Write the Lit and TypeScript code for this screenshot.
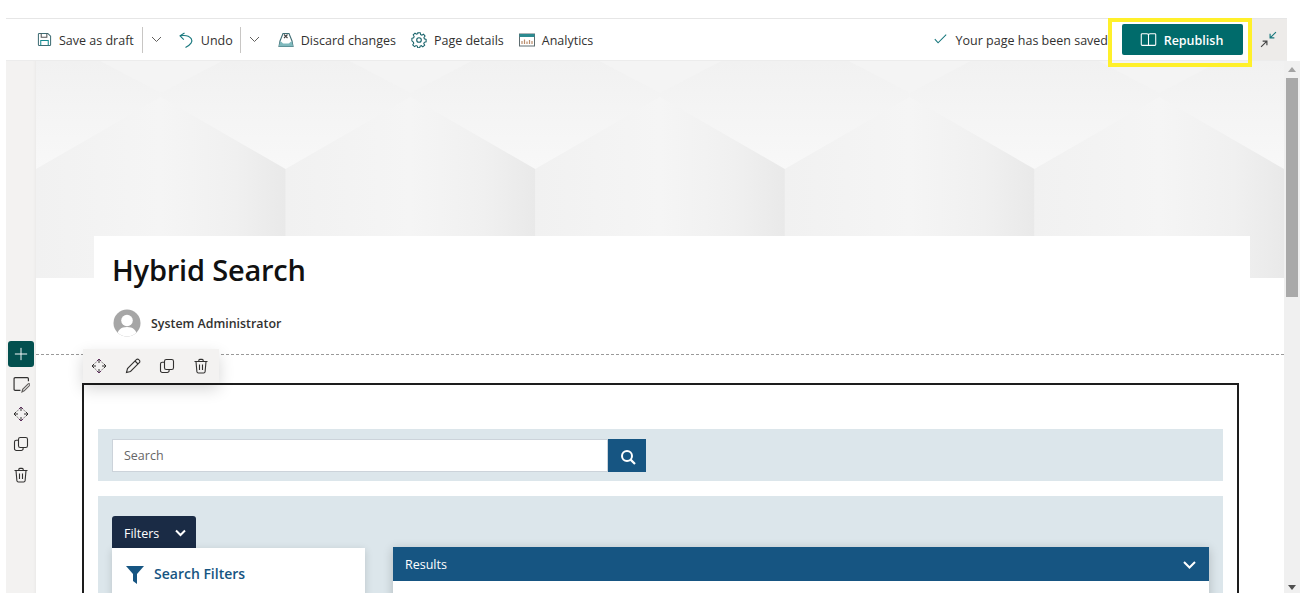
import { LitElement, html, css, svg } from "lit";
import { customElement } from "lit/decorators.js";

const moveIcon = svg`<g fill="none" stroke="#323130" stroke-width="1"><path d="M8 1v4M8 11v4M1 8h4M11 8h4" /><path d="M5.800 3.200 8 1l2.200 2.200M5.800 12.800 8 15l2.200-2.200" stroke="#5c2d5c"/><path d="M3.200 5.800 1 8l2.200 2.200M12.800 5.800 15 8l-2.200 2.200"/><path d="M5.500 3.800 3.800 5.500M10.500 3.800l1.700 1.700M5.500 12.200l-1.700-1.700M10.500 12.200l1.700-1.700" stroke="#8a8886"/></g>`;
const copyIcon = svg`<g fill="none" stroke="#323130" stroke-width="1.100"><rect x="5.500" y="1.500" width="9" height="10" rx="1.800"/><path d="M5.500 4.200H3.300a1.800 1.800 0 0 0-1.800 1.800v6.700a1.800 1.800 0 0 0 1.800 1.800h5a1.800 1.800 0 0 0 1.800-1.800v-1.200"/></g>`;
const trashIcon = svg`<g fill="none" stroke="#323130" stroke-width="1.100"><path d="M1.500 3.500h13M5.800 3.500V2.400a1 1 0 0 1 1-1h2.400a1 1 0 0 1 1 1v1.100M3 3.500l.9 10.200a1.500 1.500 0 0 0 1.500 1.300h5.200a1.500 1.500 0 0 0 1.500-1.300L13 3.500M6.500 6.500v5.500M9.500 6.500v5.500"/></g>`;
const penIcon = svg`<g fill="none" stroke="#323130" stroke-width="1.100"><path d="M1.500 14.500l1-4L11.300 1.700a1.700 1.700 0 0 1 2.500 0l.5.5a1.700 1.700 0 0 1 0 2.500L5.500 13.500z"/><path d="M10 3l3 3"/></g>`;
const editBoxIcon = svg`<g fill="none" stroke="#323130" stroke-width="1.100"><path d="M7 13.500H2a1 1 0 0 1-1-1v-10a1 1 0 0 1 1-1h11.500a1 1 0 0 1 1 1V5"/><path d="M8.500 15l.6-2.400 5.200-5.200a1 1 0 0 1 1.400 1.400l-5.200 5.200z" stroke="#605e5c"/></g>`;
const chevron = svg`<path d="M1 1l4.500 4.500L10 1" fill="none" stroke="#605e5c" stroke-width="1"/>`;

const ico = (w: number, body: unknown, vb = 16) =>
  html`<svg class="ico" width=${w} height=${w} viewBox="0 0 ${vb} ${vb}">${body}</svg>`;

@customElement("app-root")
export class AppRoot extends LitElement {
  static styles = css`
    :host { display: block; width: 1301px; height: 593px; overflow: hidden; background: #fff; font-family: "Open Sans", "Noto Sans", sans-serif; color: #323130; }
    .app { position: relative; height: 593px; padding: 18px 0 0 6px; box-sizing: border-box; display: flex; flex-direction: column; }
    .ico { display: block; flex: none; }

    .toolbar { width: 1281px; height: 43px; box-sizing: border-box; flex: none; border-top: 1px solid #e6e6e6; border-bottom: 1px solid #ececec; display: flex; align-items: center; font-size: 12.500px; background: #fff; }
    .tbtn { display: flex; align-items: center; gap: 7px; white-space: nowrap; }
    .tbtn span, .saved span, .publish span { padding-top: 2px; }
    .sep { width: 1px; height: 26px; background: #c8c6c4; }
    .spacer { flex: 1; }
    .saved { display: flex; align-items: center; gap: 9px; white-space: nowrap; }
    .publish { margin-left: 14px; width: 121px; height: 31px; border-radius: 2px; background: #006b6b; color: #fff; font-weight: 600; display: flex; align-items: center; justify-content: center; gap: 7px; font-size: 12.500px; padding-right: 2px; box-sizing: border-box; }
    .collapse { margin-left: 9px; align-self: stretch; width: 35px; background: #edebe9; display: flex; align-items: center; justify-content: center; padding-right: 3px; box-sizing: border-box; }
    .highlight { position: absolute; z-index: 5; left: 1108px; top: 18px; width: 144px; height: 49px; box-sizing: border-box; border: 4px solid #fff02a; }

    .body { flex: 1; min-height: 0; display: flex; overflow: hidden; }
    .rail { width: 30px; flex: none; background: #f3f2f1; display: flex; flex-direction: column; align-items: center; padding-top: 280px; box-sizing: border-box; box-shadow: inset -4px 0 4px -4px rgba(0,0,0,.06); }
    .plus { width: 26px; height: 26px; border-radius: 3px; background: #03504f; display: flex; align-items: center; justify-content: center; margin-bottom: 9px; }
    .m13 { margin-bottom: 13px; }
    .m14 { margin-bottom: 14px; }
    .m15 { margin-bottom: 15px; }
    .canvas { position: relative; width: 1248px; flex: none; overflow: hidden; background: #fff; }
    .hero { display: block; width: 1248px; height: 217px; }

    .title { position: relative; margin: -42px 34px 0 58px; height: 118px; background: #fff; padding: 14px 0 0 18px; box-sizing: border-box; }
    h1 { margin: 0; font-size: 29px; line-height: 40px; font-weight: 600; color: #111; letter-spacing: -.2px; }
    .author { display: flex; align-items: center; gap: 10px; margin: 19px 0 0 1px; font-size: 12.400px; font-weight: 600; }

    .dash { height: 0; border-top: 1px dashed #9a9a9a; margin-top: 0; }
    .float { position: absolute; left: 47px; top: 288px; width: 136px; height: 34px; background: #f3f2f1; box-shadow: 0 6px 16px rgba(0,0,0,.16); display: flex; align-items: center; gap: 18px; padding-left: 8px; box-sizing: border-box; z-index: 2; }

    .part { margin: 28px 45px 0 46px; border: 2px solid #1d1d1d; border-bottom: 0; height: 300px; box-sizing: border-box; padding: 44px 14px 0; }
    .band { background: #dce6eb; }
    .searchband { height: 52px; padding: 10px 14px; box-sizing: border-box; display: flex; }
    .input { width: 496px; height: 33px; box-sizing: border-box; background: #fff; border: 1px solid #ccd3da; font-size: 12.500px; color: #666; display: flex; align-items: center; padding: 0 0 0 11px; }
    .sbtn { width: 38px; height: 33px; background: #165582; display: flex; align-items: center; justify-content: center; padding: 2px 0 0 2px; box-sizing: border-box; }

    .filterband { margin-top: 15px; height: 200px; padding: 20px 14px 0; box-sizing: border-box; }
    .tab { width: 84px; height: 32px; border-radius: 3px 3px 0 0; background: #1a2b45; color: #fff; font-size: 12.500px; display: flex; align-items: center; justify-content: space-between; padding: 2px 10px 0 12px; box-sizing: border-box; }
    .cols { display: flex; gap: 28px; align-items: flex-start; }
    .panel { width: 253px; height: 80px; background: #fff; box-shadow: 0 2px 8px rgba(0,0,0,.15); display: flex; align-items: flex-start; gap: 10px; padding: 18px 0 0 14px; box-sizing: border-box; color: #165582; font-size: 14px; font-weight: 600; line-height: 15px; }
    .results { flex: 1; margin-top: -1px; box-shadow: 0 2px 10px rgba(0,0,0,.2); background: #fff; height: 80px; }
    .rhead { height: 34px; background: #165582; color: #fff; display: flex; align-items: center; justify-content: space-between; font-size: 12.500px; padding: 1px 13px 0 12px; box-sizing: border-box; }

    .scroll { width: 16px; flex: none; background: #f0f0f0; position: relative; display: flex; flex-direction: column; align-items: center; }
    .arrow { flex: none; margin-top: 6px; width: 0; height: 0; border-left: 4px solid transparent; border-right: 4px solid transparent; border-bottom: 5px solid #a3a3a3; }
    .thumb { flex: none; margin-top: 6px; width: 12px; height: 219px; background: #a9a9a9; }
    .down { margin-top: auto; margin-bottom: 3px; width: 0; height: 0; border-left: 4px solid transparent; border-right: 4px solid transparent; border-top: 5px solid #505050; }
  `;

  private hero() {
    const tiles = [0, 1, 2, 3, 4];
    return html`<svg class="hero" viewBox="0 0 1248 217" preserveAspectRatio="none">
      <defs>
        <linearGradient id="lf" x1="0" x2="1" y1="0" y2="0"><stop offset="0" stop-color="#f1f1f1"/><stop offset=".5" stop-color="#f5f5f5"/><stop offset=".8" stop-color="#f0f0f0"/><stop offset="1" stop-color="#e9e9e9"/></linearGradient>
        <linearGradient id="tp" x1="0" x2="0" y1="0" y2="1"><stop offset="0" stop-color="#f1f1f1"/><stop offset="1" stop-color="#f8f8f8"/></linearGradient>
      </defs>
      <rect width="1248" height="217" fill="#efefef"/>
      ${tiles.map((i) => svg`<rect x=${i * 249.6} width="249.600" height="217" fill="url(#lf)"/>`)}
      ${[-1, 0, 1, 2, 3, 4].map((i) => {
        const x = i * 249.6;
        return svg`<g transform="translate(${x} 0)">
          <polygon points="124.800,36 249.600,108 374.400,36 374.400,0 124.800,0" fill="url(#tp)"/>
        </g>`;
      })}
      ${tiles.map((i) => svg`<polygon transform="translate(${i * 249.6} 0)" points="64,0 125,32 186,0" fill="#f4f4f4"/>`)}
    </svg>`;
  }

  render() {
    const chev = html`<svg class="ico" width="11" height="7" viewBox="0 0 11 7">${chevron}</svg>`;
    return html`<div class="app">
      <div class="toolbar">
        <div class="tbtn" style="margin-left:31px">
          ${ico(15, svg`<g fill="none" stroke-width="1.100"><path d="M1.500 2.500a1 1 0 0 1 1-1h9l3 3v9a1 1 0 0 1-1 1h-11a1 1 0 0 1-1-1z" stroke="#3f6d74"/><path d="M4.500 1.500v4h6v-4" stroke="#555"/><path d="M4 14.500v-5.500h8v5.500" stroke="#138a90"/></g>`)}
          <span>Save as draft</span>
        </div>
        <div class="sep" style="margin-left:8px"></div>
        <div style="margin-left:8px">${chev}</div>
        <div class="tbtn" style="margin-left:16px">
          ${ico(16, svg`<path d="M6.500 1 2 3.800l3.800 3.900M2 3.800c4-.7 9-.4 11.200 2.800 2 3-.5 6-5.700 8.900" fill="none" stroke="#17777d" stroke-width="1.100"/>`)}
          <span>Undo</span>
        </div>
        <div class="sep" style="margin-left:7px"></div>
        <div style="margin-left:8px">${chev}</div>
        <div class="tbtn" style="margin-left:18px">
          ${ico(16, svg`<g fill="none" stroke-width="1.100"><path d="M1 14.500 2 9 5 1.500h6L14 9l1 5.500z" stroke="#3f6d74"/><path d="M6 2.500l3.500 3.500M9.500 2.500 6 6" stroke="#444"/></g><path d="M1 14.500 2 9.500c2 0 2.500 2 3.500 2h5c1 0 1.500-2 3.500-2l1 5z" fill="#7fb9bd"/>`)}
          <span>Discard changes</span>
        </div>
        <div class="tbtn" style="margin-left:15px">
          ${ico(16, svg`<g fill="none" stroke="#17626a" stroke-width="1.100"><circle cx="8" cy="8" r="2.300"/><path d="M6.700 1h2.600l.4 1.900 1.300.6 1.700-1 1.700 2-1.200 1.500.4 1.300 1.900.7v2.600l-1.900.5-.6 1.300 1 1.700-2 1.700-1.500-1.200-1.300.4-.5 1.900H6.700l-.5-1.900-1.300-.5-1.600 1.100-1.900-1.900 1.100-1.600-.5-1.300L.5 9.500V6.900l1.900-.6.5-1.300-1-1.700 1.900-1.800 1.600 1.100 1.300-.6z" transform="translate(.4 -.2) scale(.95)"/></g>`)}
          <span>Page details</span>
        </div>
        <div class="tbtn" style="margin-left:15px">
          ${ico(16, svg`<rect x=".5" y="2" width="15" height="12" fill="#fff" stroke="#5f6d70"/><rect x=".5" y="2" width="15" height="3" fill="#2b8a90"/><path d="M3 12V9M5.500 12V7.500M8 12V9.500M10.500 12V8M13 12V9" stroke="#b98b6a" stroke-width="1.200"/>`)}
          <span>Analytics</span>
        </div>
        <div class="spacer"></div>
        <div class="saved">
          ${ico(13, svg`<path d="M1 7.500 5 12 15 2" fill="none" stroke="#17777d" stroke-width="1.300"/>`)}
          <span>Your page has been saved</span>
        </div>
        <div class="publish">
          ${ico(17, svg`<path d="M2 2.500h4.500c.7 0 1.500.5 1.500 1.500 0-1 .8-1.500 1.500-1.500H14a.8.8 0 0 1 .8.8v9.400a.8.8 0 0 1-.8.8H2a.8.8 0 0 1-.8-.8V3.300a.8.8 0 0 1 .8-.8zM8 4v9.500" fill="none" stroke="#fff" stroke-width="1"/>`)}
          <span>Republish</span>
        </div>
        <div class="collapse">
          ${ico(17, svg`<g fill="none" stroke-width="1.100"><path d="M15 1 9.500 6.500M9.500 2.500v4h4" stroke="#17777d"/><path d="M1 15l5.500-5.500M2.500 9.500h4v4" stroke="#444"/></g>`)}
        </div>
      </div>
      <div class="highlight"></div>
      <div class="body">
        <div class="rail">
          <div class="plus">${ico(14, svg`<path d="M8 1v14M1 8h14" stroke="#fff" stroke-width="1.100"/>`)}</div>
          <div class="m13">${ico(17, editBoxIcon)}</div>
          <div class="m14">${ico(16, moveIcon)}</div>
          <div class="m15">${ico(16, copyIcon)}</div>
          ${ico(16, trashIcon)}
        </div>
        <div class="canvas">
          ${this.hero()}
          <div class="title">
            <h1>Hybrid Search</h1>
            <div class="author">
              <svg class="ico" width="28" height="28" viewBox="0 0 28 28">
                <defs><clipPath id="av"><circle cx="14" cy="14" r="13.500"/></clipPath></defs>
                <circle cx="14" cy="14" r="13.500" fill="#a6a6a6"/>
                <g clip-path="url(#av)"><circle cx="14" cy="11.500" r="5.800" fill="#fff"/><path d="M4 28c0-7 4-10 10-10s10 3 10 10z" fill="#fff"/></g>
              </svg>
              <span>System Administrator</span>
            </div>
          </div>
          <div class="dash"></div>
          <div class="float">
            ${ico(16, moveIcon)}${ico(16, penIcon)}${ico(16, copyIcon)}${ico(16, trashIcon)}
          </div>
          <div class="part">
            <div class="band searchband">
              <div class="input">Search</div>
              <div class="sbtn">${ico(16, svg`<circle cx="7" cy="7" r="5" fill="none" stroke="#fff" stroke-width="2"/><path d="M10.600 10.600 15 15" stroke="#fff" stroke-width="2.200"/>`)}</div>
            </div>
            <div class="band filterband">
              <div class="tab"><span>Filters</span><svg class="ico" width="11" height="8" viewBox="0 0 11 8"><path d="M1 1.500l4.500 4.500L10 1.500" fill="none" stroke="#fff" stroke-width="2"/></svg></div>
              <div class="cols">
                <div class="panel">
                  ${ico(18, svg`<path d="M0 0h18l-7 8v10l-4-3V8z" fill="#165582"/>`, 18)}
                  <span>Search Filters</span>
                </div>
                <div class="results">
                  <div class="rhead"><span>Results</span><svg class="ico" width="13" height="8" viewBox="0 0 13 8"><path d="M1 1l5.500 5.500L12 1" fill="none" stroke="#fff" stroke-width="2"/></svg></div>
                </div>
              </div>
            </div>
          </div>
        </div>
        <div class="scroll"><div class="arrow"></div><div class="thumb"></div><div class="down"></div></div>
      </div>
    </div>`;
  }
}
